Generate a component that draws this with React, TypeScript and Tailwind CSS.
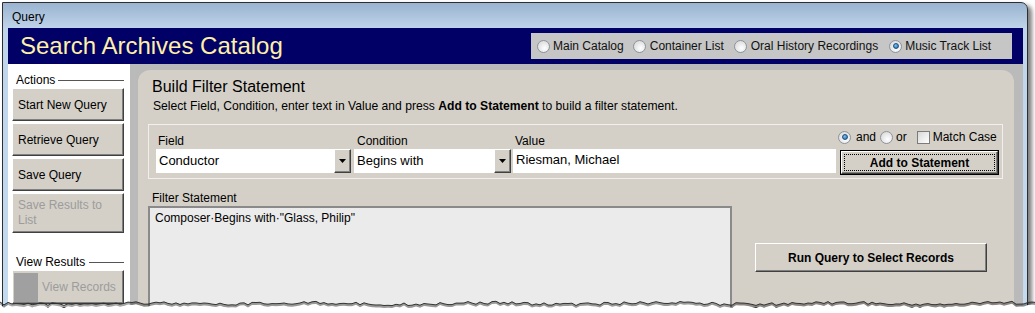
import React from 'react';

const bevel =
  'bg-[#d4d0c8] border border-t-white border-l-white border-b-[#404040] border-r-[#404040] shadow-[inset_-1px_-1px_0_#808080]';

const Radio = ({ checked }: { checked?: boolean }) => (
  <span className="relative inline-flex items-center justify-center w-[13px] h-[13px] rounded-full border border-[#8c949c] bg-[radial-gradient(circle_at_60%_65%,#ffffff,#d2d2d2)] shrink-0">
    {checked && (
      <span className="w-[6px] h-[6px] rounded-full bg-[radial-gradient(circle_at_40%_35%,#7fc4f2,#1d5f9e)] border border-[#1b4f80]" />
    )}
  </span>
);

const Check = () => (
  <span className="inline-block w-[13px] h-[13px] border border-[#7b7b7b] bg-[linear-gradient(135deg,#d8d8d8,#ffffff)] shrink-0" />
);

const DropBtn = () => (
  <div className={`w-[17px] h-[24px] flex items-center justify-center ${bevel}`}>
    <svg width="7" height="4" viewBox="0 0 7 4">
      <path d="M0 0h7L3.5 4z" fill="#000" />
    </svg>
  </div>
);

const SideButton = ({
  label,
  disabled,
  tall,
}: {
  label: string;
  disabled?: boolean;
  tall?: boolean;
}) => (
  <div
    className={`w-[112px] ${tall ? 'h-[40px] leading-[15px]' : 'h-[33px]'} flex items-center pl-[5px] pr-[4px] text-[12px] ${
      disabled ? 'text-[#9c9c9c]' : 'text-black'
    } ${bevel}`}
  >
    {label}
  </div>
);

const tornEdge = () => {
  const pts: string[] = [];
  for (let i = 0; i <= 260; i++) {
    const x = i * 4;
    const r = Math.abs(Math.sin(i * 12.9898) * 43758.5453) % 1;
    const y = 6 + r * 3 + Math.sin(i / 7) * 0.8;
    pts.push(`${x},${y.toFixed(1)}`);
  }
  return pts;
};

export default function App() {
  const pts = tornEdge();
  const line = 'M' + pts.join(' L');
  const fill = line + ' L1040,20 L0,20 Z';

  return (
    <div className="relative w-[1035px] h-[313px] bg-white overflow-hidden font-['Liberation_Sans',Arial,sans-serif] text-black">
      <div className="absolute left-[2px] top-[2px] w-[1026px] h-[306px] border border-[#2e2e2e] rounded-tr-[7px] bg-[linear-gradient(to_bottom,#9ab3cf,#bfd5eb_26px,#c4daef)] shadow-[4px_3px_4px_rgba(0,0,0,0.5)] flex flex-col pl-[5px] pr-[4px]">
        {/* title */}
        <div className="h-[25px] flex items-center pl-[4px] pt-[3px] text-[12px]">Query</div>

        {/* banner */}
        <div className="h-[36px] bg-[#000066] flex items-center justify-between pl-[12px] pr-[11px]">
          <div className="text-[24px] leading-[28px] text-[#fff0a6]">Search Archives Catalog</div>
          <div className="w-[481px] h-[26px] bg-[#c6c6c6] flex items-center pl-[6px] gap-[9px] text-[12px] text-[#111]">
            <span className="flex items-center gap-[3px]">
              <Radio /> Main Catalog
            </span>
            <span className="flex items-center gap-[4px]">
              <Radio /> Container List
            </span>
            <span className="flex items-center gap-[4px] ml-[1px]">
              <Radio /> Oral History Recordings
            </span>
            <span className="flex items-center gap-[3px] ml-[2px]">
              <Radio checked /> Music Track List
            </span>
          </div>
        </div>

        {/* body */}
        <div className="flex flex-1 min-h-0">
          {/* left actions */}
          <div className="w-[122px] bg-white pl-[4px] pr-[6px] pt-[9px] flex flex-col">
            <div className="flex items-center text-[12px] leading-[14px] ml-[4px]">
              <span>Actions</span>
              <span className="flex-1 h-px bg-[#555] ml-[3px]" />
            </div>
            <div className="mt-[1px] flex flex-col gap-[2px]">
              <SideButton label="Start New Query" />
              <SideButton label="Retrieve Query" />
              <SideButton label="Save Query" />
              <SideButton label="Save Results to List" disabled tall />
            </div>
            <div className="mt-[22px] flex items-center text-[12px] leading-[14px] ml-[4px]">
              <span>View Results</span>
              <span className="flex-1 h-px bg-[#555] ml-[4px]" />
            </div>
            <div className={`mt-[1px] w-[112px] h-[34px] flex items-center pl-[1px] text-[12px] text-[#9c9c9c] ${bevel}`}>
              <span className="w-[24px] h-[29px] bg-[#a0a0a0] mr-[4px]" />
              View Records
            </div>
          </div>

          {/* main */}
          <div className="flex-1 bg-[#bababa] pl-[8px] pr-[9px] pt-[6px]">
            <div className="h-full bg-[#d4d0c8] rounded-t-[12px] pl-[10px] pt-[7px]">
              <div className="pl-[4px] text-[16px] leading-[19px]">Build Filter Statement</div>
              <div className="pl-[5px] mt-[3px] text-[12.15px] leading-[14px]">
                Select Field, Condition, enter text in Value and press <b>Add to Statement</b> to build a filter
                statement.
              </div>

              {/* fieldset */}
              <div className="mt-[11px] w-[855px] h-[55px] border border-[#f2f0ec] pl-[7px] pt-[9px] flex items-start">
                <div className="flex flex-col">
                  <span className="pl-[2px] text-[12px] leading-[14px]">Field</span>
                  <div className="mt-px flex">
                    <div className="w-[178px] h-[24px] bg-white pl-[3px] text-[13px] leading-[24px]">Conductor</div>
                    <DropBtn />
                  </div>
                </div>
                <div className="flex flex-col ml-[3px]">
                  <span className="pl-[3px] text-[12px] leading-[14px]">Condition</span>
                  <div className="mt-px flex">
                    <div className="w-[140px] h-[24px] bg-white pl-[3px] text-[13px] leading-[24px]">Begins with</div>
                    <DropBtn />
                  </div>
                </div>
                <div className="flex flex-col ml-[2px]">
                  <span className="pl-[2px] text-[12px] leading-[14px]">Value</span>
                  <div className="mt-px w-[323px] h-[24px] bg-white pl-[3px] text-[13px] leading-[22px]">
                    Riesman, Michael
                  </div>
                </div>
                <div className="flex flex-col ml-[4px] -mt-[5px]">
                  <div className="h-[16px] -ml-[2px] flex items-center text-[12px] gap-[4px]">
                    <span className="flex items-center gap-[5px]">
                      <Radio checked />
                      and
                    </span>
                    <span className="flex items-center gap-[3px]">
                      <Radio />
                      or
                    </span>
                    <span className="flex items-center gap-[3px] ml-[6px]">
                      <Check />
                      Match Case
                    </span>
                  </div>
                  <div className="mt-[5px] w-[159px] h-[25px] border border-black">
                    <div className={`h-full w-full p-[2px] ${bevel}`}>
                      <div className="h-full w-full border border-dotted border-black flex items-center justify-center text-[12px] font-bold">
                        Add to Statement
                      </div>
                    </div>
                  </div>
                </div>
              </div>

              {/* filter statement */}
              <div className="mt-[12px] pl-[4px] text-[12px] leading-[14px]">Filter Statement</div>
              <div className="mt-px flex items-start">
                <div className="w-[584px] h-[110px] border-2 border-[#8a8a8a] bg-[#ebebeb] pl-[5px] pt-[3px] text-[12px] leading-[14px]">
                  Composer·Begins with·"Glass, Philip"
                </div>
                <div
                  className={`ml-[23px] mt-[37px] w-[232px] h-[29px] flex items-center justify-center text-[12px] font-bold ${bevel}`}
                >
                  Run Query to Select Records
                </div>
              </div>
            </div>
          </div>
        </div>
      </div>

      {/* torn bottom edge */}
      <svg className="absolute left-0 top-[296px]" width="1035" height="17" viewBox="0 0 1035 17">
        <path d={line} transform="translate(0,1.5)" fill="none" stroke="#000" strokeOpacity="0.35" strokeWidth="3" />
        <path d={line} fill="none" stroke="#333" strokeWidth="1" />
        <path d={fill} transform="translate(0,2.5)" fill="#fff" />
      </svg>
    </div>
  );
}
